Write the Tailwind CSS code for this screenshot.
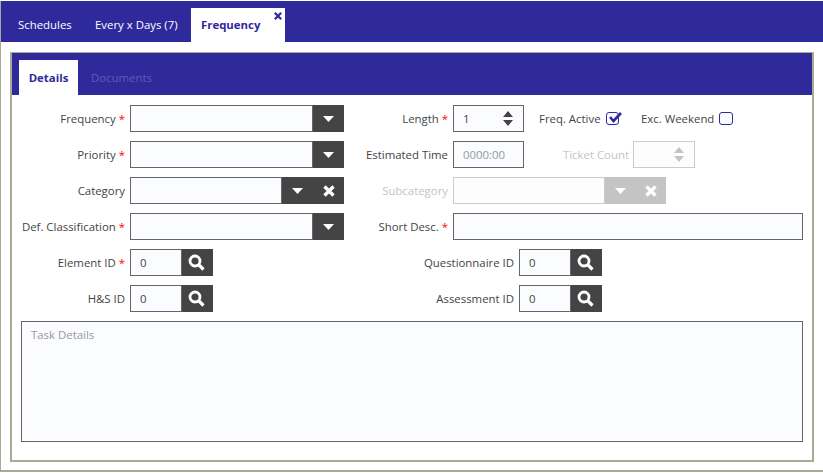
<!DOCTYPE html>
<html lang="en">
<head>
    <meta charset="UTF-8">
    <title>Frequency</title>
    <script src="https://cdn.jsdelivr.net/npm/@tailwindcss/browser@4"></script>
</head>
<body class="w-[823px] h-[473px] overflow-hidden bg-white font-['Open_Sans',sans-serif] text-[11.4px] text-[#444]">
    <!-- top tabs -->
    <div class="h-[41px] mt-px bg-[#2e2a9c] border-l border-[#a9a995] flex items-end pl-[17px] text-white">
        <div class="h-[34px] w-[77px] flex items-center font-medium">Schedules</div>
        <div class="h-[34px] w-[96px] flex items-center font-medium">Every x Days (7)</div>
        <div class="relative h-[34px] w-[94px] flex items-center pl-[10px] bg-white text-[#2e2a9c] font-bold">
            Frequency
            <svg class="absolute right-[3px] top-[4px] w-[8px] h-[8px]" viewBox="0 0 10 10"><path d="M1 1l8 8M9 1l-8 8" stroke="#2e2a9c" stroke-width="2.800"/></svg>
        </div>
    </div>

    <div class="h-[430px] border-l border-b-2 border-[#a9a995] pt-[10px] px-[9px]">
        <div class="h-[410px] border-2 border-[#a9a995] border-t-[1px]">
            <!-- inner tabs -->
            <div class="h-[42px] bg-[#2e2a9c] flex items-end pl-[7px]">
                <div class="h-[35px] w-[59px] bg-white text-[#2e2a9c] font-bold flex items-center justify-center">Details</div>
                <div class="h-[35px] ml-[13px] flex items-center font-medium text-[#5f5cb0]">Documents</div>
            </div>

            <div class="pt-[10px] pl-[9px] pr-[9px]">
                <!-- row 1 -->
                <div class="flex h-[27px] mb-[9px]">
                    <div class="w-[323px] flex shrink-0">
                        <label class="w-[104px] flex items-center justify-end">Frequency&nbsp;<span class="text-[#f00]">*</span></label>
                        <div class="ml-[5px] w-[214px] flex">
                            <div class="flex-1 bg-[#fbfcff] border border-[#666]"></div>
                            <div class="w-[31px] bg-[#444] flex items-center justify-center"><svg class="w-[11px] h-[6px]" viewBox="0 0 11 6"><path d="M0 0h11L5.500 6z" fill="#fff"/></svg></div>
                        </div>
                    </div>
                    <label class="w-[104px] flex items-center justify-end">Length&nbsp;<span class="text-[#f00]">*</span></label>
                    <div class="ml-[5px] w-[71px] bg-[#fbfcff] border border-[#666] flex items-center justify-between pl-[9px] pr-[10px]">
                        <span>1</span>
                        <svg class="w-[10px] h-[15px]" viewBox="0 0 10 15"><path d="M5 0l5 6H0zM5 15L0 9h10z" fill="#444"/></svg>
                    </div>
                    <label class="ml-[15px] w-[61px] whitespace-nowrap flex items-center">Freq. Active</label>
                    <div class="ml-[6px] self-center relative w-[13px] h-[13px] border border-[#2e2a9c] rounded-[3px] bg-[#fbfcff]">
                        <svg class="absolute left-[1px] -top-[2px] w-[15px] h-[13px]" viewBox="0 0 15 13"><path d="M2 6l3.500 4L13 2" fill="none" stroke="#2e2a9c" stroke-width="2.600"/></svg>
                    </div>
                    <label class="ml-[22px] w-[73px] whitespace-nowrap flex items-center">Exc. Weekend</label>
                    <div class="ml-[5px] self-center w-[14px] h-[13px] border border-[#2e2a9c] rounded-[3px] bg-[#fbfcff]"></div>
                </div>

                <!-- row 2 -->
                <div class="flex h-[27px] mb-[9px]">
                    <div class="w-[323px] flex shrink-0">
                        <label class="w-[104px] flex items-center justify-end">Priority&nbsp;<span class="text-[#f00]">*</span></label>
                        <div class="ml-[5px] w-[214px] flex">
                            <div class="flex-1 bg-[#fbfcff] border border-[#666]"></div>
                            <div class="w-[31px] bg-[#444] flex items-center justify-center"><svg class="w-[11px] h-[6px]" viewBox="0 0 11 6"><path d="M0 0h11L5.500 6z" fill="#fff"/></svg></div>
                        </div>
                    </div>
                    <label class="w-[104px] flex items-center justify-end whitespace-nowrap">Estimated Time</label>
                    <div class="ml-[5px] w-[71px] bg-[#fbfcff] border border-[#666] flex items-center pl-[9px] text-[#999]">0000:00</div>
                    <label class="w-[105px] flex items-center justify-end text-[#c4c4c4] whitespace-nowrap">Ticket Count</label>
                    <div class="ml-[4px] w-[62px] bg-[#fdfdfe] border border-[#ccc] flex items-center justify-end pr-[10px]">
                        <svg class="w-[10px] h-[15px]" viewBox="0 0 10 15"><path d="M5 0l5 6H0zM5 15L0 9h10z" fill="#c4c4c4"/></svg>
                    </div>
                </div>

                <!-- row 3 -->
                <div class="flex h-[27px] mb-[9px]">
                    <div class="w-[323px] flex shrink-0">
                        <label class="w-[104px] flex items-center justify-end">Category</label>
                        <div class="ml-[5px] w-[214px] flex">
                            <div class="flex-1 bg-[#fbfcff] border border-[#666]"></div>
                            <div class="w-[31px] bg-[#444] flex items-center justify-center"><svg class="w-[11px] h-[6px]" viewBox="0 0 11 6"><path d="M0 0h11L5.500 6z" fill="#fff"/></svg></div>
                            <div class="w-[31px] bg-[#444] flex items-center justify-center"><svg class="w-[12px] h-[12px]" viewBox="0 0 12 12"><path d="M1.500 1.500l9 9M10.500 1.500l-9 9" stroke="#fff" stroke-width="3.400"/></svg></div>
                        </div>
                    </div>
                    <label class="w-[104px] flex items-center justify-end text-[#c4c4c4]">Subcategory</label>
                    <div class="ml-[5px] w-[213px] flex">
                        <div class="flex-1 bg-[#fdfdfe] border border-[#ccc]"></div>
                        <div class="w-[31px] bg-[#c4c4c4] flex items-center justify-center"><svg class="w-[11px] h-[6px]" viewBox="0 0 11 6"><path d="M0 0h11L5.500 6z" fill="#fff"/></svg></div>
                        <div class="w-[30px] bg-[#c4c4c4] flex items-center justify-center pr-[1px]"><svg class="w-[12px] h-[12px]" viewBox="0 0 12 12"><path d="M1.500 1.500l9 9M10.500 1.500l-9 9" stroke="#fff" stroke-width="3.400"/></svg></div>
                    </div>
                </div>

                <!-- row 4 -->
                <div class="flex h-[27px] mb-[9px]">
                    <div class="w-[323px] flex shrink-0">
                        <label class="w-[104px] flex items-center justify-end whitespace-nowrap">Def. Classification&nbsp;<span class="text-[#f00]">*</span></label>
                        <div class="ml-[5px] w-[214px] flex">
                            <div class="flex-1 bg-[#fbfcff] border border-[#666]"></div>
                            <div class="w-[31px] bg-[#444] flex items-center justify-center"><svg class="w-[11px] h-[6px]" viewBox="0 0 11 6"><path d="M0 0h11L5.500 6z" fill="#fff"/></svg></div>
                        </div>
                    </div>
                    <label class="w-[104px] flex items-center justify-end">Short Desc.&nbsp;<span class="text-[#f00]">*</span></label>
                    <div class="ml-[5px] flex-1 bg-[#fbfcff] border border-[#666]"></div>
                </div>

                <!-- row 5 -->
                <div class="flex h-[27px] mb-[9px]">
                    <div class="w-[323px] flex shrink-0">
                        <label class="w-[104px] flex items-center justify-end">Element ID&nbsp;<span class="text-[#f00]">*</span></label>
                        <div class="ml-[5px] w-[83px] flex">
                            <div class="flex-1 bg-[#fbfcff] border border-[#666] flex items-center pl-[9px]">0</div>
                            <div class="w-[31px] bg-[#444] flex items-center justify-center pr-[2px]"><svg class="w-[17px] h-[17px]" viewBox="0 0 17 17"><circle cx="7" cy="7" r="5" fill="none" stroke="#fff" stroke-width="2.800"/><path d="M10.500 10.500l5 5" stroke="#fff" stroke-width="3.200"/></svg></div>
                        </div>
                    </div>
                    <label class="w-[170px] flex items-center justify-end">Questionnaire ID</label>
                    <div class="ml-[5px] w-[83px] flex">
                        <div class="flex-1 bg-[#fbfcff] border border-[#666] flex items-center pl-[9px]">0</div>
                        <div class="w-[31px] bg-[#444] flex items-center justify-center pr-[2px]"><svg class="w-[17px] h-[17px]" viewBox="0 0 17 17"><circle cx="7" cy="7" r="5" fill="none" stroke="#fff" stroke-width="2.800"/><path d="M10.500 10.500l5 5" stroke="#fff" stroke-width="3.200"/></svg></div>
                    </div>
                </div>

                <!-- row 6 -->
                <div class="flex h-[27px] mb-[9px]">
                    <div class="w-[323px] flex shrink-0">
                        <label class="w-[104px] flex items-center justify-end">H&amp;S ID</label>
                        <div class="ml-[5px] w-[83px] flex">
                            <div class="flex-1 bg-[#fbfcff] border border-[#666] flex items-center pl-[9px]">0</div>
                            <div class="w-[31px] bg-[#444] flex items-center justify-center pr-[2px]"><svg class="w-[17px] h-[17px]" viewBox="0 0 17 17"><circle cx="7" cy="7" r="5" fill="none" stroke="#fff" stroke-width="2.800"/><path d="M10.500 10.500l5 5" stroke="#fff" stroke-width="3.200"/></svg></div>
                        </div>
                    </div>
                    <label class="w-[170px] flex items-center justify-end">Assessment ID</label>
                    <div class="ml-[5px] w-[83px] flex">
                        <div class="flex-1 bg-[#fbfcff] border border-[#666] flex items-center pl-[9px]">0</div>
                        <div class="w-[31px] bg-[#444] flex items-center justify-center pr-[2px]"><svg class="w-[17px] h-[17px]" viewBox="0 0 17 17"><circle cx="7" cy="7" r="5" fill="none" stroke="#fff" stroke-width="2.800"/><path d="M10.500 10.500l5 5" stroke="#fff" stroke-width="3.200"/></svg></div>
                    </div>
                </div>

                <div class="h-[121px] bg-[#fbfcff] border border-[#666] pl-[9px] pt-[4px] text-[#999]">Task Details</div>
            </div>
        </div>
    </div>
</body>
</html>
